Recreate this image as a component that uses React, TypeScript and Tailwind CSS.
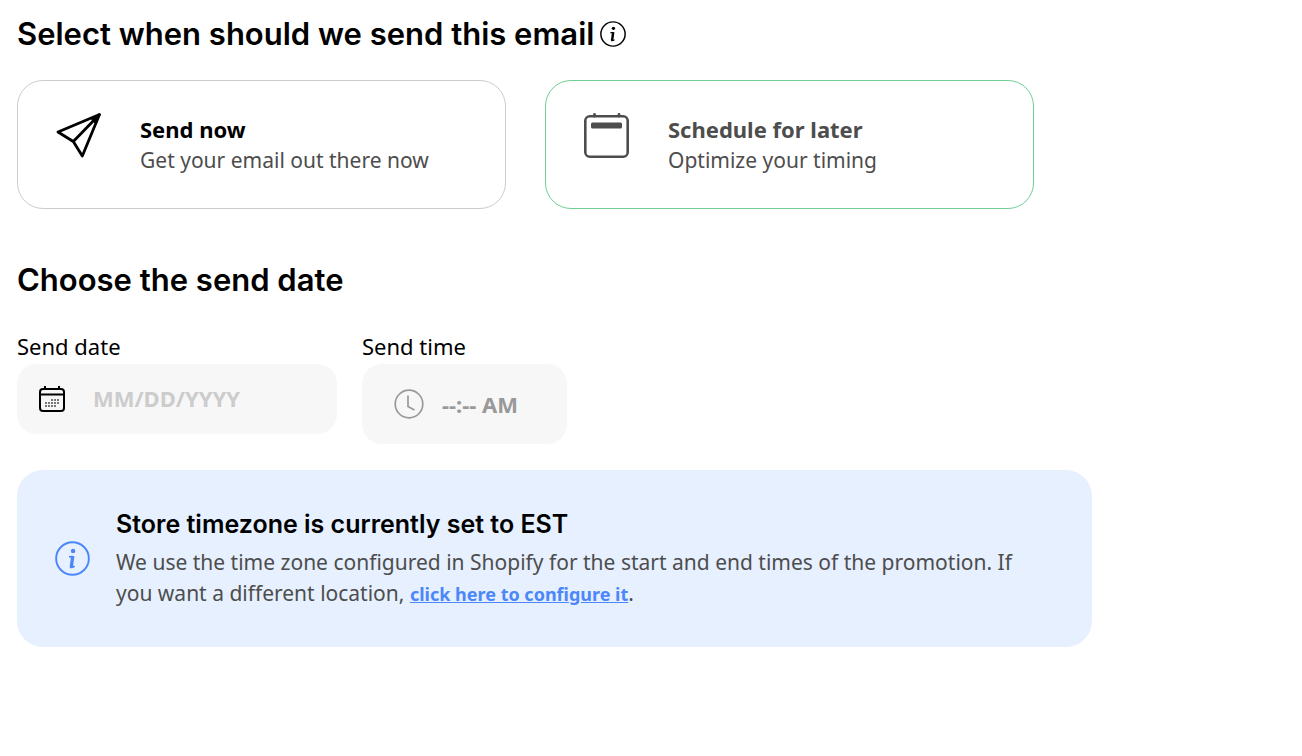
import React, { useState } from 'react';

type SendMode = 'now' | 'later';

const InfoIcon: React.FC<{ className?: string }> = ({ className }) => (
  <svg viewBox="0 0 36 36" fill="none" stroke="currentColor" className={className} aria-hidden="true">
    <circle cx="18" cy="18" r="16.8" strokeWidth="2" />
    <circle cx="18.6" cy="10.2" r="2.3" fill="currentColor" stroke="none" />
    <path d="M14.4 16.2h4.500" strokeWidth="1.8" />
    <path d="M18.300 15.500 16.700 27" strokeWidth="3.400" />
    <path d="M15.400 27.200c2.200.2 3.600-.3 4.700-1.400" strokeWidth="1.800" />
  </svg>
);

const SendIcon: React.FC = () => (
  <svg viewBox="0 0 46 46" fill="none" stroke="currentColor" strokeWidth="2.8" strokeLinejoin="round" className="size-[46px] shrink-0" aria-hidden="true">
    <path d="M43.5 1.5 2 19 17.3 28.5 26.3 43Z" />
    <path d="M43.5 1.5 17.3 28.5" />
    <path d="M43.5 1.5 36 6.5 40 10.5Z" fill="currentColor" strokeWidth="1.5" />
  </svg>
);

const ScheduleIcon: React.FC = () => (
  <svg viewBox="0 0 46 46" fill="none" stroke="currentColor" className="size-[46px] shrink-0" aria-hidden="true">
    <rect x="1.3" y="3.3" width="42.4" height="40.4" rx="4.5" strokeWidth="2.6" />
    <path d="M10.5 3V1.5M35 3V1.5" strokeWidth="2.8" strokeLinecap="round" />
    <rect x="7" y="9.500" width="31" height="6" rx="1.5" fill="currentColor" stroke="none" />
  </svg>
);

const dots = [
  [13, 14], [16, 14], [19, 14],
  [7, 17], [10, 17], [13, 17], [16, 17], [19, 17],
  [7, 20], [10, 20], [13, 20], [16, 20],
];

const DateIcon: React.FC = () => (
  <svg viewBox="0 0 26 27" fill="none" stroke="currentColor" className="h-[27px] w-[26px] shrink-0" aria-hidden="true">
    <rect x="1" y="4" width="24" height="22" rx="3" strokeWidth="2" />
    <path d="M1 9.5h24" strokeWidth="2" />
    <path d="M6 4V1M20 4V1" strokeWidth="2" />
    {dots.map(([x, y]) => (
      <rect key={`${x}-${y}`} x={x - 1} y={y} width="2" height="2" fill="#777777" stroke="none" />
    ))}
  </svg>
);

const ClockIcon: React.FC = () => (
  <svg viewBox="0 0 30 30" fill="none" stroke="currentColor" className="size-[30px] shrink-0 text-[#999999]" aria-hidden="true">
    <circle cx="15" cy="15" r="13.8" strokeWidth="1.7" />
    <path d="M14 6.5V17.5L20.5 21" strokeWidth="1.7" />
  </svg>
);

const options: { id: SendMode; title: string; text: string; icon: React.ReactNode; style: string }[] = [
  { id: 'now', title: 'Send now', text: 'Get your email out there now', icon: <SendIcon />, style: 'text-black' },
  { id: 'later', title: 'Schedule for later', text: 'Optimize your timing', icon: <ScheduleIcon />, style: 'text-[#4d4d4d]' },
];

const App: React.FC = () => {
  const [mode, setMode] = useState<SendMode>('later');
  const [date, setDate] = useState('');
  const [time, setTime] = useState('');

  return (
    <main className="min-h-screen bg-white px-[17px] pt-3 pb-8 font-['Noto_Sans',sans-serif] text-[22px] text-black">
      <div className="flex items-center gap-1.5">
        <h1 className="font-['Inter',sans-serif] text-[31px] leading-11 font-semibold">
          Select when should we send this email
        </h1>
        <button type="button" aria-label="More about send times">
          <InfoIcon className="size-[26px]" />
        </button>
      </div>

      {/* Send mode */}
      <div className="mt-6 grid max-w-[1017px] grid-cols-2 gap-[39px]">
        {options.map((option) => (
          <button
            key={option.id}
            type="button"
            aria-pressed={mode === option.id}
            onClick={() => setMode(option.id)}
            className={`flex items-start gap-[38px] rounded-[26px] border px-[38px] py-8 text-left ${option.style} ${
              mode === option.id ? 'border-[#6fcf97]' : 'border-[#cccccc]'
            }`}
          >
            {option.icon}
            <span>
              <strong className="block leading-8 font-bold">{option.title}</strong>
              <span className="block text-[21px] leading-[31px] text-[#4d4d4d]">{option.text}</span>
            </span>
          </button>
        ))}
      </div>

      <h2 className="mt-[49px] font-['Inter',sans-serif] text-[31px] leading-11 font-semibold">
        Choose the send date
      </h2>

      {/* Date and time */}
      <div className="mt-7 flex items-start gap-[25px]">
        <div className="w-80">
          <label htmlFor="send-date" className="mb-0.5 block leading-8">Send date</label>
          <div className="flex h-[70px] items-center gap-7 rounded-[20px] bg-[#f7f7f7] px-[22px] pb-0.5">
            <DateIcon />
            <input
              id="send-date"
              type="text"
              placeholder="MM/DD/YYYY"
              value={date}
              onChange={(e) => setDate(e.target.value)}
              className="w-full min-w-0 font-bold outline-none placeholder:text-[#cccccc]"
            />
          </div>
        </div>
        <div className="w-[205px]">
          <label htmlFor="send-time" className="mb-0.5 block leading-8">Send time</label>
          <div className="flex h-20 items-center gap-[18px] rounded-[20px] bg-[#f7f7f7] px-8">
            <ClockIcon />
            <input
              id="send-time"
              type="text"
              placeholder="--:-- AM"
              value={time}
              onChange={(e) => setTime(e.target.value)}
              className="w-full min-w-0 font-bold outline-none placeholder:text-[#999999]"
            />
          </div>
        </div>
      </div>

      {/* Timezone notice */}
      <section className="mt-[26px] flex max-w-[1075px] items-center gap-[26px] rounded-[26px] bg-[#e6f0ff] pt-9 pr-12 pb-[37px] pl-[38px]">
        <InfoIcon className="size-[35px] shrink-0 text-[#4c87f9]" />
        <div>
          <h3 className="mb-[5px] font-['Inter',sans-serif] text-[25px] leading-9 font-semibold">
            Store timezone is currently set to EST
          </h3>
          <p className="text-[21px] leading-[31px] text-[#4d4d4d]">
            We use the time zone configured in Shopify for the start and end times of the promotion. If
            you want a different location,{' '}
            <a href="#timezone" className="text-[18px] font-bold text-[#4c87f9] underline">click here to configure it</a>.
          </p>
        </div>
      </section>
    </main>
  );
};

export default App;
